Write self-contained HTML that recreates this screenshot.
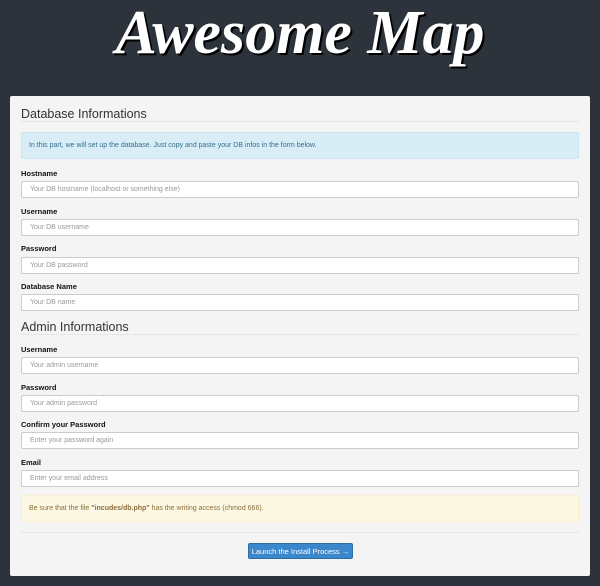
<!DOCTYPE html>
<html><head><meta charset="utf-8"><style>
*{box-sizing:border-box;margin:0;padding:0}
body{width:600px;height:586px;background:#2d333b;font-family:"Liberation Sans",sans-serif;position:relative;overflow:hidden}
.title{position:absolute;left:0;top:-2px;width:600px;text-align:center;color:#fff;font-family:"Liberation Serif",serif;font-style:italic;font-weight:bold;font-size:62px;letter-spacing:0px;text-shadow:2px 2px 0 #000}
.panel{position:absolute;left:10px;top:96px;width:580px;height:480px;background:#f4f4f4;border-radius:2px}
h3{position:absolute;left:11px;font-weight:normal;font-size:12.5px;color:#333}
.line{position:absolute;left:11px;width:558px;height:1px;background:#e6e6e6}
label{position:absolute;left:11px;font-size:7.5px;font-weight:bold;color:#111}
.in{position:absolute;left:11px;width:558px;height:17px;background:#fff;border:1px solid #ccc;border-radius:2px;font-size:7px;color:#999;padding:4px 0 0 8px}
.info{position:absolute;left:11px;top:36px;width:558px;height:27px;background:#d9edf7;border:1px solid #c7e5f2;border-radius:2px;font-size:7px;color:#31708f;padding:9px 0 0 7px}
.warn{position:absolute;left:11px;top:399px;width:558px;height:27px;background:#fcf8e3;border:1px solid #faf0d0;border-radius:2px;font-size:7px;color:#8a6d3b;padding:9px 0 0 7px}
.btn{position:absolute;left:238px;top:447px;width:105px;height:16px;background:#3a87cc;border:1px solid #2e6da4;border-radius:2px;color:#fff;font-size:7.5px;text-align:center;padding-top:3px}
</style></head><body>
<div class="title">Awesome Map</div>
<div class="panel">
<h3 style="top:11px">Database Informations</h3>
<div class="line" style="top:25px"></div>
<div class="info">In this part, we will set up the database. Just copy and paste your DB infos in the form below.</div>
<label style="top:73px">Hostname</label><div class="in" style="top:85px">Your DB hostname (localhost or something else)</div>
<label style="top:111px">Username</label><div class="in" style="top:123px">Your DB username</div>
<label style="top:148px">Password</label><div class="in" style="top:161px">Your DB password</div>
<label style="top:186px">Database Name</label><div class="in" style="top:198px">Your DB name</div>
<h3 style="top:224px">Admin Informations</h3>
<div class="line" style="top:238px"></div>
<label style="top:249px">Username</label><div class="in" style="top:261px">Your admin username</div>
<label style="top:287px">Password</label><div class="in" style="top:299px">Your admin password</div>
<label style="top:324px">Confirm your Password</label><div class="in" style="top:336px">Enter your password again</div>
<label style="top:362px">Email</label><div class="in" style="top:374px">Enter your email address</div>
<div class="warn">Be sure that the file <b>"incudes/db.php"</b> has the writing access (chmod 666).</div>
<div class="line" style="top:436px"></div>
<div class="btn">Launch the Install Process →</div>
</div>
</body></html>
